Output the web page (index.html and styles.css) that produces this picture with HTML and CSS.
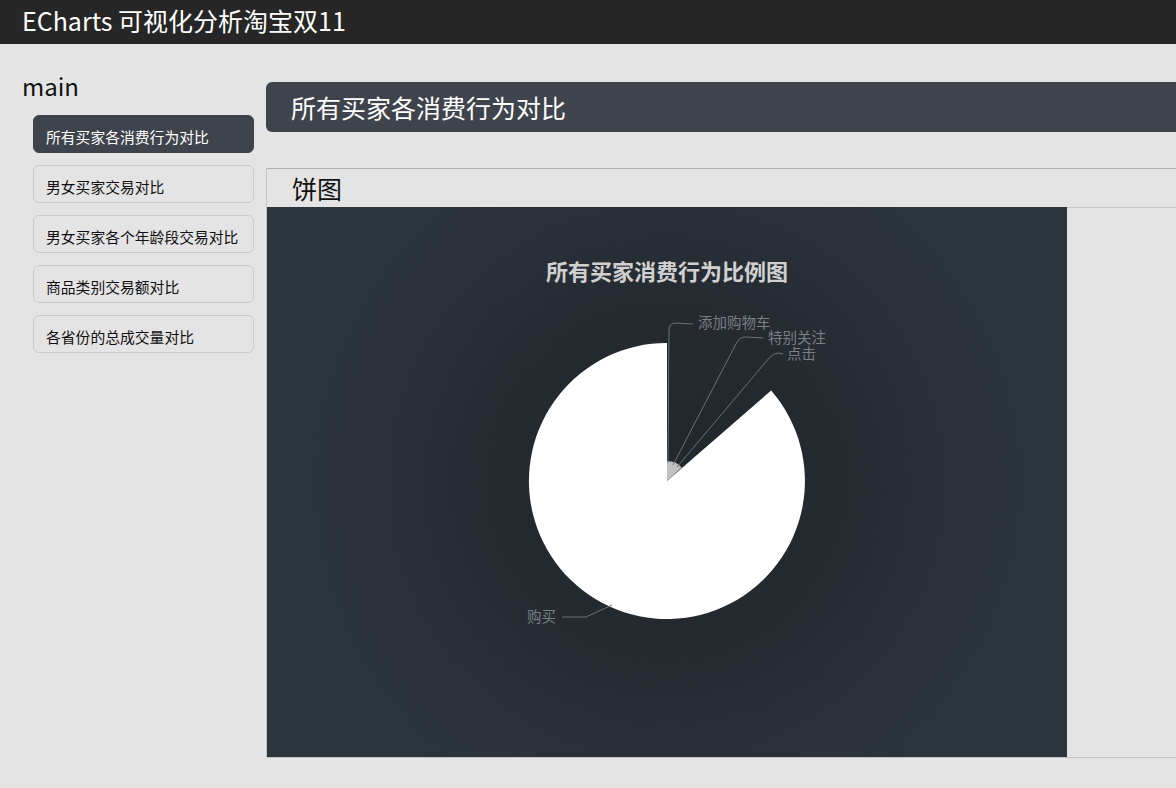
FILE: index.html
```html
<!DOCTYPE html>
<html lang="zh">
<head>
<meta charset="utf-8">
<title>ECharts 可视化分析淘宝双11</title>
<link rel="stylesheet" href="styles.css">
</head>
<body>
<header class="topbar">ECharts 可视化分析淘宝双11</header>
<div class="layout">
  <aside class="sidebar">
    <h2 class="side-title">main</h2>
    <nav class="nav">
      <a class="nav-item active">所有买家各消费行为对比</a>
      <a class="nav-item">男女买家交易对比</a>
      <a class="nav-item">男女买家各个年龄段交易对比</a>
      <a class="nav-item">商品类别交易额对比</a>
      <a class="nav-item">各省份的总成交量对比</a>
    </nav>
  </aside>
  <main class="content">
    <div class="banner">所有买家各消费行为对比</div>
    <section class="panel">
      <div class="panel-heading">饼图</div>
      <div class="panel-body">
        <div class="chart">
          <svg class="chart-svg" width="800" height="550" viewBox="0 0 800 550">
            <text class="chart-title" x="400" y="73" text-anchor="middle">所有买家消费行为比例图</text>
            <path d="M400,274 L504.1,183.5 A138,138 0 1 1 400,136 Z" fill="#ffffff"/>
            <path d="M400,274 L400,254 A20,20 0 0 1 414.6,260.4 Z" fill="#c1c1c1"/>
            <g class="lines" fill="none" stroke="#6c7077" stroke-width="1">
              <path d="M401,256 L402,123 Q402,116 409,116 L426,117"/>
              <path d="M406,258 L470,135 Q473,130 479,130 L496,131"/>
              <path d="M410,260 L503,150 Q507,146 512,146 L516,147"/>
              <path d="M345,398 L319,410 L295,410"/>
            </g>
            <g class="labels">
              <text x="431" y="121">添加购物车</text>
              <text x="501" y="136">特别关注</text>
              <text x="520" y="152">点击</text>
              <text x="260" y="415">购买</text>
            </g>
          </svg>
        </div>
      </div>
    </section>
  </main>
</div>
</body>
</html>
```
FILE: styles.css
```css
html, body {
  margin: 0;
  padding: 0;
  overflow: hidden;
  background: #e4e4e4;
  font-family: "Noto Sans CJK SC", "Noto Sans", sans-serif;
  color: #111;
}

.topbar {
  height: 44px;
  box-sizing: border-box;
  background: #262626;
  color: #fff;
  font-size: 25px;
  line-height: 40px;
  padding-left: 22px;
}

.layout {
  display: flex;
  align-items: flex-start;
}

.sidebar {
  width: 266px;
  flex: none;
  box-sizing: border-box;
  padding-left: 22px;
}

.side-title {
  margin: 26px 0 0 0;
  font-size: 24px;
  font-weight: normal;
  line-height: 32px;
  height: 32px;
}

.nav {
  display: flex;
  flex-direction: column;
  gap: 12px;
  margin: 13px 0 0 11px;
  width: 221px;
}

.nav-item {
  display: flex;
  align-items: center;
  box-sizing: border-box;
  height: 38px;
  padding: 5px 12px 0 12px;
  border: 1px solid #cbcbcb;
  border-radius: 6px;
  font-size: 14.8px;
  color: #111;
  white-space: nowrap;
}

.nav-item.active {
  background: #3f434c;
  border-color: #3f434c;
  color: #fff;
}

.content {
  width: 1000px;
  flex: none;
}

.banner {
  margin-top: 38px;
  height: 50px;
  box-sizing: border-box;
  background: #3f434c;
  border-radius: 6px 0 0 6px;
  color: #fff;
  font-size: 25px;
  line-height: 50px;
  padding-left: 25px;
}

.panel {
  margin-top: 36px;
  border-top: 1px solid #aeaeae;
  border-left: 1px solid #c4c4c4;
  border-bottom: 1px solid #c4c4c4;
}

.panel-heading {
  height: 39px;
  box-sizing: border-box;
  border-bottom: 1px solid #c8c8c8;
  font-size: 25px;
  line-height: 38px;
  padding-left: 25px;
  color: #111;
}

.panel-body {
  margin-top: -1px;
}

.chart {
  width: 800px;
  height: 550px;
  background: radial-gradient(circle at 50% 50%, #22272e 0%, #252a31 35%, #2c343c 75%);
}

.chart-svg {
  display: block;
}

.chart-title {
  fill: #d0d0d0;
  font-size: 22px;
  font-weight: bold;
  font-family: "Noto Sans CJK SC", sans-serif;
}

.labels text {
  fill: #7b7f86;
  font-size: 14.5px;
  font-family: "Noto Sans CJK SC", sans-serif;
}
```
